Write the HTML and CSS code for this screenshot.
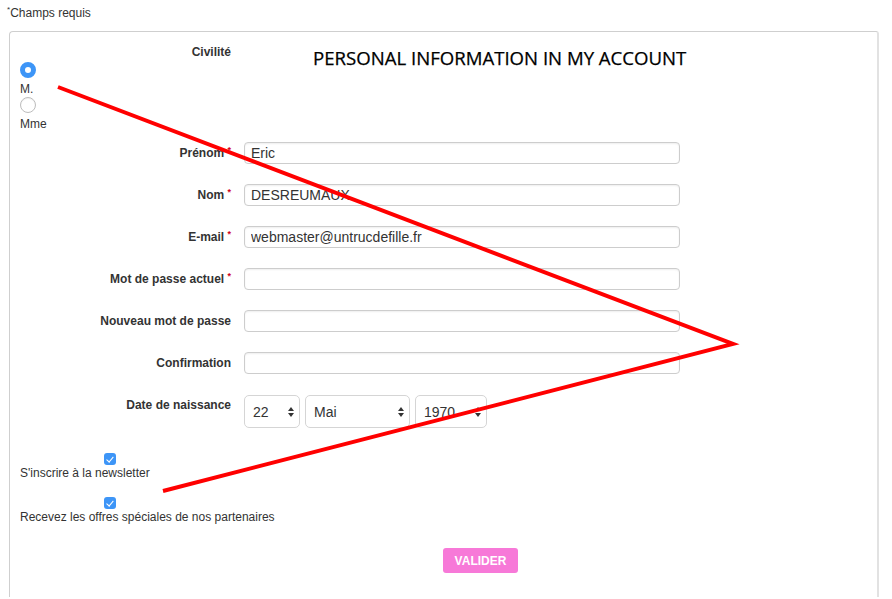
FILE: index.html
```html
<!DOCTYPE html>
<html lang="fr">
<head>
  <meta charset="UTF-8">
  <title>Mon compte - Informations personnelles</title>
  <link rel="stylesheet" href="styles.css">
</head>
<body>
  <p class="required"><sup>*</sup>Champs requis</p>

  <form class="account">
    <!-- Civilité -->
    <div class="civility">
      <div class="civility-label">Civilité</div>
      <label class="choice"><input type="radio" name="civilite" checked><span>M.</span></label>
      <label class="choice"><input type="radio" name="civilite"><span>Mme</span></label>
    </div>

    <!-- Champs du compte -->
    <div class="fields">
      <label class="label" for="prenom">Prénom <sup>*</sup></label>
      <input class="field" id="prenom" type="text" value="Eric">

      <label class="label" for="nom">Nom <sup>*</sup></label>
      <input class="field" id="nom" type="text" value="DESREUMAUX">

      <label class="label" for="email">E-mail <sup>*</sup></label>
      <input class="field" id="email" type="text" value="webmaster@untrucdefille.fr">

      <label class="label" for="old">Mot de passe actuel <sup>*</sup></label>
      <input class="field" id="old" type="password">

      <label class="label" for="new">Nouveau mot de passe</label>
      <input class="field" id="new" type="password">

      <label class="label" for="confirm">Confirmation</label>
      <input class="field" id="confirm" type="password">

      <label class="label label-date" for="day">Date de naissance</label>
      <div class="date">
        <span class="select select-day">
          <select id="day"><option>22</option></select>
          <svg class="arrows" width="6" height="12" viewBox="0 0 6 12"><path d="M0 5 3 1 6 5Z M0 7 3 11 6 7Z" fill="#333"/></svg>
        </span>
        <span class="select select-month">
          <select><option>Mai</option></select>
          <svg class="arrows" width="6" height="12" viewBox="0 0 6 12"><path d="M0 5 3 1 6 5Z M0 7 3 11 6 7Z" fill="#333"/></svg>
        </span>
        <span class="select select-year">
          <select><option>1970</option></select>
          <svg class="arrows" width="6" height="12" viewBox="0 0 6 12"><path d="M0 5 3 1 6 5Z M0 7 3 11 6 7Z" fill="#333"/></svg>
        </span>
      </div>
    </div>

    <!-- Options -->
    <div class="options">
      <label class="check"><input type="checkbox" checked><span>S'inscrire à la newsletter</span></label>
      <label class="check"><input type="checkbox" checked><span>Recevez les offres spéciales de nos partenaires</span></label>
    </div>

    <div class="actions">
      <button type="submit" class="submit">Valider</button>
    </div>
  </form>

  <!-- Annotations -->
  <h1 class="note-title">PERSONAL INFORMATION IN MY ACCOUNT</h1>
  <svg class="note-lines" width="892" height="599" viewBox="0 0 892 599">
    <polyline points="58,87 733,344 163,491" fill="none" stroke="#ff0000" stroke-width="4" stroke-linejoin="miter"/>
  </svg>
</body>
</html>
```

FILE: styles.css
```css
html, body {
  margin: 0;
  padding: 0;
  background: #fff;
  color: #333;
  font-family: "Liberation Sans", Arial, sans-serif;
  font-size: 12px;
  overflow: hidden;
}

body {
  position: relative;
  height: 599px;
}

.required {
  margin: 0;
  padding: 4px 0 0 7px;
  line-height: 18px;
}

.required sup {
  font-size: 8px;
  vertical-align: 5px;
  line-height: 0;
}

.account {
  margin: 9px 0 0 9px;
  width: 870px;
  box-sizing: border-box;
  padding: 12px 10px 24px;
  border-top: 1px solid #cfcfcf;
  border-left: 1px solid #cfcfcf;
  border-right: 2px solid #e2e2e2;
  border-top-left-radius: 4px;
  border-top-right-radius: 3px;
}

/* Civilité */
.civility-label {
  width: 211px;
  text-align: right;
  font-weight: bold;
  line-height: 16px;
}

.choice {
  display: block;
  margin-top: 2px;
}

.choice span {
  display: block;
  margin-top: 3px;
  line-height: 16px;
}

.choice input {
  appearance: none;
  -webkit-appearance: none;
  display: block;
  margin: 0;
  width: 16px;
  height: 16px;
  box-sizing: border-box;
  border-radius: 50%;
  border: 1px solid #bdbdbd;
  background: #fff;
  box-shadow: inset 0 1px 1px rgba(0, 0, 0, 0.06);
}

.choice input:checked {
  border: 5px solid #3d95f7;
  box-shadow: none;
}

.choice + .choice {
  margin-top: 0;
}

/* Champs */
.fields {
  display: grid;
  grid-template-columns: 211px 436px;
  column-gap: 13px;
  row-gap: 20px;
  align-items: start;
  margin-top: 10px;
}

.label {
  text-align: right;
  font-weight: bold;
  line-height: 22px;
  white-space: nowrap;
}

.label sup {
  color: #d0021b;
  font-size: 9px;
  vertical-align: 4px;
  line-height: 0;
}

.label-date {
  line-height: 18px;
  padding-top: 2px;
}

.field {
  display: block;
  height: 22px;
  width: 436px;
  margin: 0;
  box-sizing: border-box;
  padding: 0 6px;
  border: 1px solid #cdcdcd;
  border-radius: 4px;
  box-shadow: inset 0 1px 2px rgba(0, 0, 0, 0.07);
  font-family: "Liberation Sans", Arial, sans-serif;
  font-size: 14px;
  color: #333;
}

.date {
  display: flex;
  gap: 5px;
  margin-top: 1px;
}

.select {
  position: relative;
  display: block;
}

.select select {
  appearance: none;
  -webkit-appearance: none;
  display: block;
  height: 33px;
  margin: 0;
  box-sizing: border-box;
  padding: 0 0 0 8px;
  border: 1px solid #d5d5d5;
  border-radius: 5px;
  background: #fff;
  font-family: "Liberation Sans", Arial, sans-serif;
  font-size: 14px;
  color: #333;
}

.select-day select { width: 56px; }
.select-month select { width: 105px; }
.select-year select { width: 72px; }

.arrows {
  position: absolute;
  right: 6px;
  top: 11px;
}

/* Options */
.options {
  margin-top: 25px;
}

.check {
  display: block;
}

.check + .check {
  margin-top: 16px;
}

.check input {
  appearance: none;
  -webkit-appearance: none;
  position: relative;
  display: block;
  margin: 0 0 0 84px;
  width: 12px;
  height: 12px;
  border-radius: 3px;
  background: #3d95f7;
}

.check input::after {
  content: "";
  position: absolute;
  left: 4px;
  top: 1.5px;
  width: 2.5px;
  height: 6px;
  border: solid #fff;
  border-width: 0 1.5px 1.5px 0;
  transform: rotate(40deg);
}

.check span {
  display: block;
  line-height: 16px;
}

/* Bouton */
.actions {
  margin-top: 23px;
  padding-left: 423px;
}

.submit {
  width: 75px;
  height: 25px;
  border: 0;
  border-radius: 3px;
  background: #f779d8;
  color: #fff;
  font-family: "Liberation Sans", Arial, sans-serif;
  font-size: 12px;
  font-weight: bold;
  text-transform: uppercase;
  cursor: pointer;
}

/* Annotations */
.note-title {
  position: absolute;
  left: 313px;
  top: 47px;
  margin: 0;
  font-family: "Open Sans", sans-serif;
  font-weight: 400;
  font-size: 18.6px;
  line-height: 22px;
  color: #000;
  white-space: nowrap;
  -webkit-text-stroke: 0.25px #000;
}

.note-lines {
  position: absolute;
  left: 0;
  top: 0;
  pointer-events: none;
}
```
